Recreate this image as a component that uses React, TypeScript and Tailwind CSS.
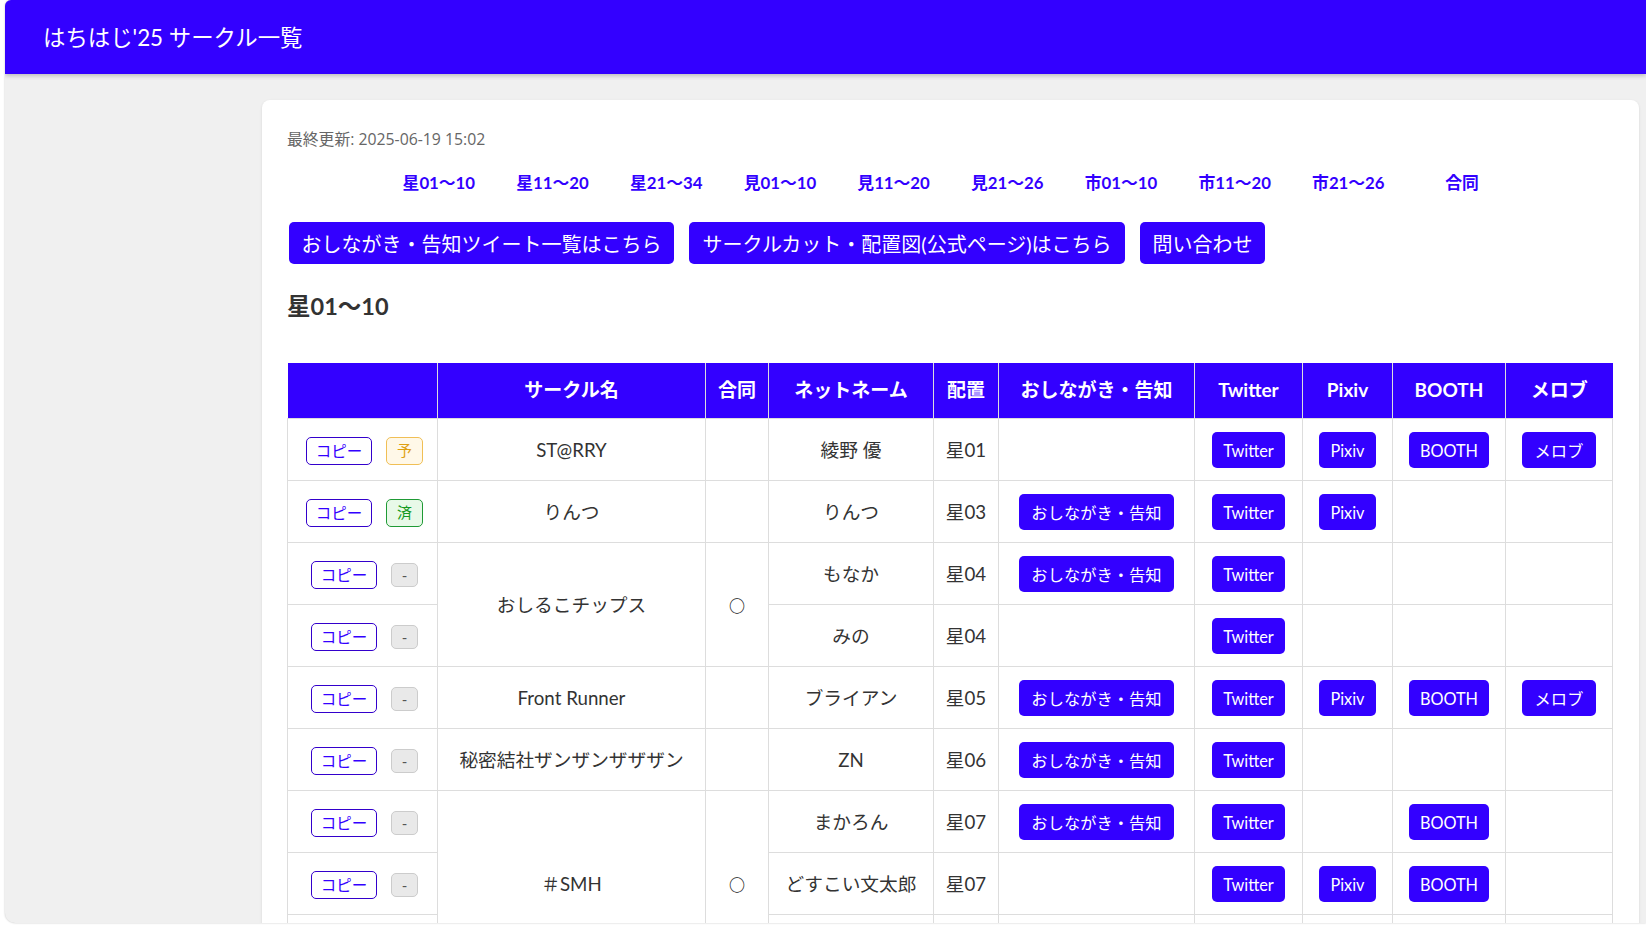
import React from "react";

const font = "font-['Lato','Noto_Sans_CJK_JP',sans-serif]";
const Btn = ({ t, latin }: { t: string; latin?: boolean }) => (
  <a className={`inline-block rounded-[5px] bg-[#3300ff] ${latin ? "px-[11px]" : "px-[12.5px]"} pb-[5px] pt-[7px] text-[16.3px] leading-[24px] text-white`}>{t}</a>
);
type R = { badge: string; circle?: [string, number]; joint?: number; net: string; pos: string; o?: boolean; tw?: boolean; px?: boolean; bo?: boolean; me?: boolean };
const rows: R[] = [
  { badge: "予", circle: ["ST@RRY", 1], net: "綾野 優", pos: "星01", tw: true, px: true, bo: true, me: true },
  { badge: "済", circle: ["りんつ", 1], net: "りんつ", pos: "星03", o: true, tw: true, px: true },
  { badge: "-", circle: ["おしるこチップス", 2], joint: 2, net: "もなか", pos: "星04", o: true, tw: true },
  { badge: "-", net: "みの", pos: "星04", tw: true },
  { badge: "-", circle: ["Front Runner", 1], net: "ブライアン", pos: "星05", o: true, tw: true, px: true, bo: true, me: true },
  { badge: "-", circle: ["秘密結社ザンザンザザザン", 1], net: "ZN", pos: "星06", o: true, tw: true },
  { badge: "-", circle: ["＃SMH", 3], joint: 3, net: "まかろん", pos: "星07", o: true, tw: true, bo: true },
  { badge: "-", net: "どすこい文太郎", pos: "星07", tw: true, px: true, bo: true },
  { badge: "", net: "", pos: "" },
];
const badgeCls: Record<string, string> = {
  "予": "h-[28px] w-[37px] border-[#f0bf55] bg-[#fff8e8] text-[#e0a010]",
  "済": "h-[28px] w-[37px] border-[#1f9a35] bg-[#e8f9e8] text-[#159a20]",
  "-": "mt-[1px] h-[24px] w-[27px] border-[#cccccc] bg-[#e9e9e9] text-[#555555]",
};
const nav = ["星01～10","星11～20","星21～34","見01～10","見11～20","見21～26","市01～10","市11～20","市21～26","合同"];
const td = "border border-[#dddddd] pt-[2px] text-center align-middle";
const topLinks: [string, string][] = [
  ["おしながき・告知ツイート一覧はこちら", "px-[12.5px]"],
  ["サークルカット・配置図(公式ページ)はこちら", "px-[13.5px]"],
  ["問い合わせ", "px-[12.5px]"],
];
export default function App() {
  return (
    <div className={`${font} h-[926px] overflow-hidden bg-white pl-[5px] text-[#333333]`}>
      <div className="h-[923px] overflow-hidden rounded-tl-[6px] rounded-bl-[10px] bg-[#f0f0f0] shadow-[0_0_2px_rgba(0,0,0,0.25)]">
        <header className="flex h-[74px] items-center bg-[#3300ff] pl-[38px] pt-[2px] text-[22.4px] text-white shadow-[0_2px_4px_rgba(0,0,0,0.2)]">はちはじ'25 サークル一覧</header>
        <main className="ml-[257px] mr-[7px] mt-[26px] h-[830px] overflow-hidden rounded-t-[8px] bg-white px-[25px] pt-[27px] shadow-[0_1px_3px_rgba(0,0,0,0.1)]">
          <p className="font-['Open_Sans','Noto_Sans_CJK_JP',sans-serif] text-[15.8px] leading-[24px] text-[#666666]">最終更新: 2025-06-19 15:02</p>
          <nav className="mt-[20px] flex pl-[95px] text-[16.8px] font-bold leading-[24px] text-[#3300ff]">
            {nav.map((n) => <a key={n} className="w-[113.7px] text-center">{n}</a>)}
          </nav>
          <div className="mt-[27px] flex gap-[15px] pl-[2px]">
            {topLinks.map(([t, p]) => (
              <a key={t} className={`rounded-[5px] bg-[#3300ff] ${p} pb-[7px] pt-[9px] text-[20px] leading-[26px] text-white`}>{t}</a>
            ))}
          </div>
          <h2 className="mt-[24px] text-[23.5px] font-bold leading-[36px]">星01～10</h2>
          <table className="mt-[39px] w-[1325px] table-fixed border-collapse text-[18.7px]">
            <colgroup>
              {[150,268,63,165,65,196,108,90,113,107].map((w, i) => <col key={i} style={{ width: w }} />)}
            </colgroup>
            <thead>
              <tr className="h-[55px] bg-[#3300ff] text-[19px] font-bold text-white">
                {["","サークル名","合同","ネットネーム","配置","おしながき・告知","Twitter","Pixiv","BOOTH","メロブ"].map((h, i) => (
                  <th key={i} className="border border-[#dddddd] border-b-0 border-t-0 first:border-l-0 last:border-r-0">{h}</th>
                ))}
              </tr>
            </thead>
            <tbody>
              {rows.map((r, i) => (
                <tr key={i} className="h-[62px]">
                  <td className={td}>
                    {r.badge && (
                      <div className="mt-[1px] flex items-center justify-center gap-[14px] pl-[4px]">
                        <button className="h-[28px] w-[66px] rounded-[5px] border border-[#3300cc] bg-white text-[15.5px] leading-[26px] text-[#3300ff]">コピー</button>
                        <span className={`flex items-center justify-center rounded-[5px] border text-[15px] ${badgeCls[r.badge]}`}>{r.badge}</span>
                      </div>
                    )}
                  </td>
                  {r.circle && <td className={td} rowSpan={r.circle[1]}>{r.circle[0]}</td>}
                  {(r.joint || r.circle) && <td className={`${td} font-['Noto_Sans_CJK_JP',sans-serif] text-[16px] font-bold text-[#222222]`} rowSpan={r.joint ?? 1}>{r.joint ? "○" : ""}</td>}
                  <td className={td}>{r.net}</td>
                  <td className={td}>{r.pos}</td>
                  <td className={td}>{r.o && <Btn t="おしながき・告知" />}</td>
                  <td className={td}>{r.tw && <Btn t="Twitter" latin />}</td>
                  <td className={td}>{r.px && <Btn t="Pixiv" latin />}</td>
                  <td className={td}>{r.bo && <Btn t="BOOTH" latin />}</td>
                  <td className={td}>{r.me && <Btn t="メロブ" />}</td>
                </tr>
              ))}
            </tbody>
          </table>
        </main>
      </div>
    </div>
  );
}
